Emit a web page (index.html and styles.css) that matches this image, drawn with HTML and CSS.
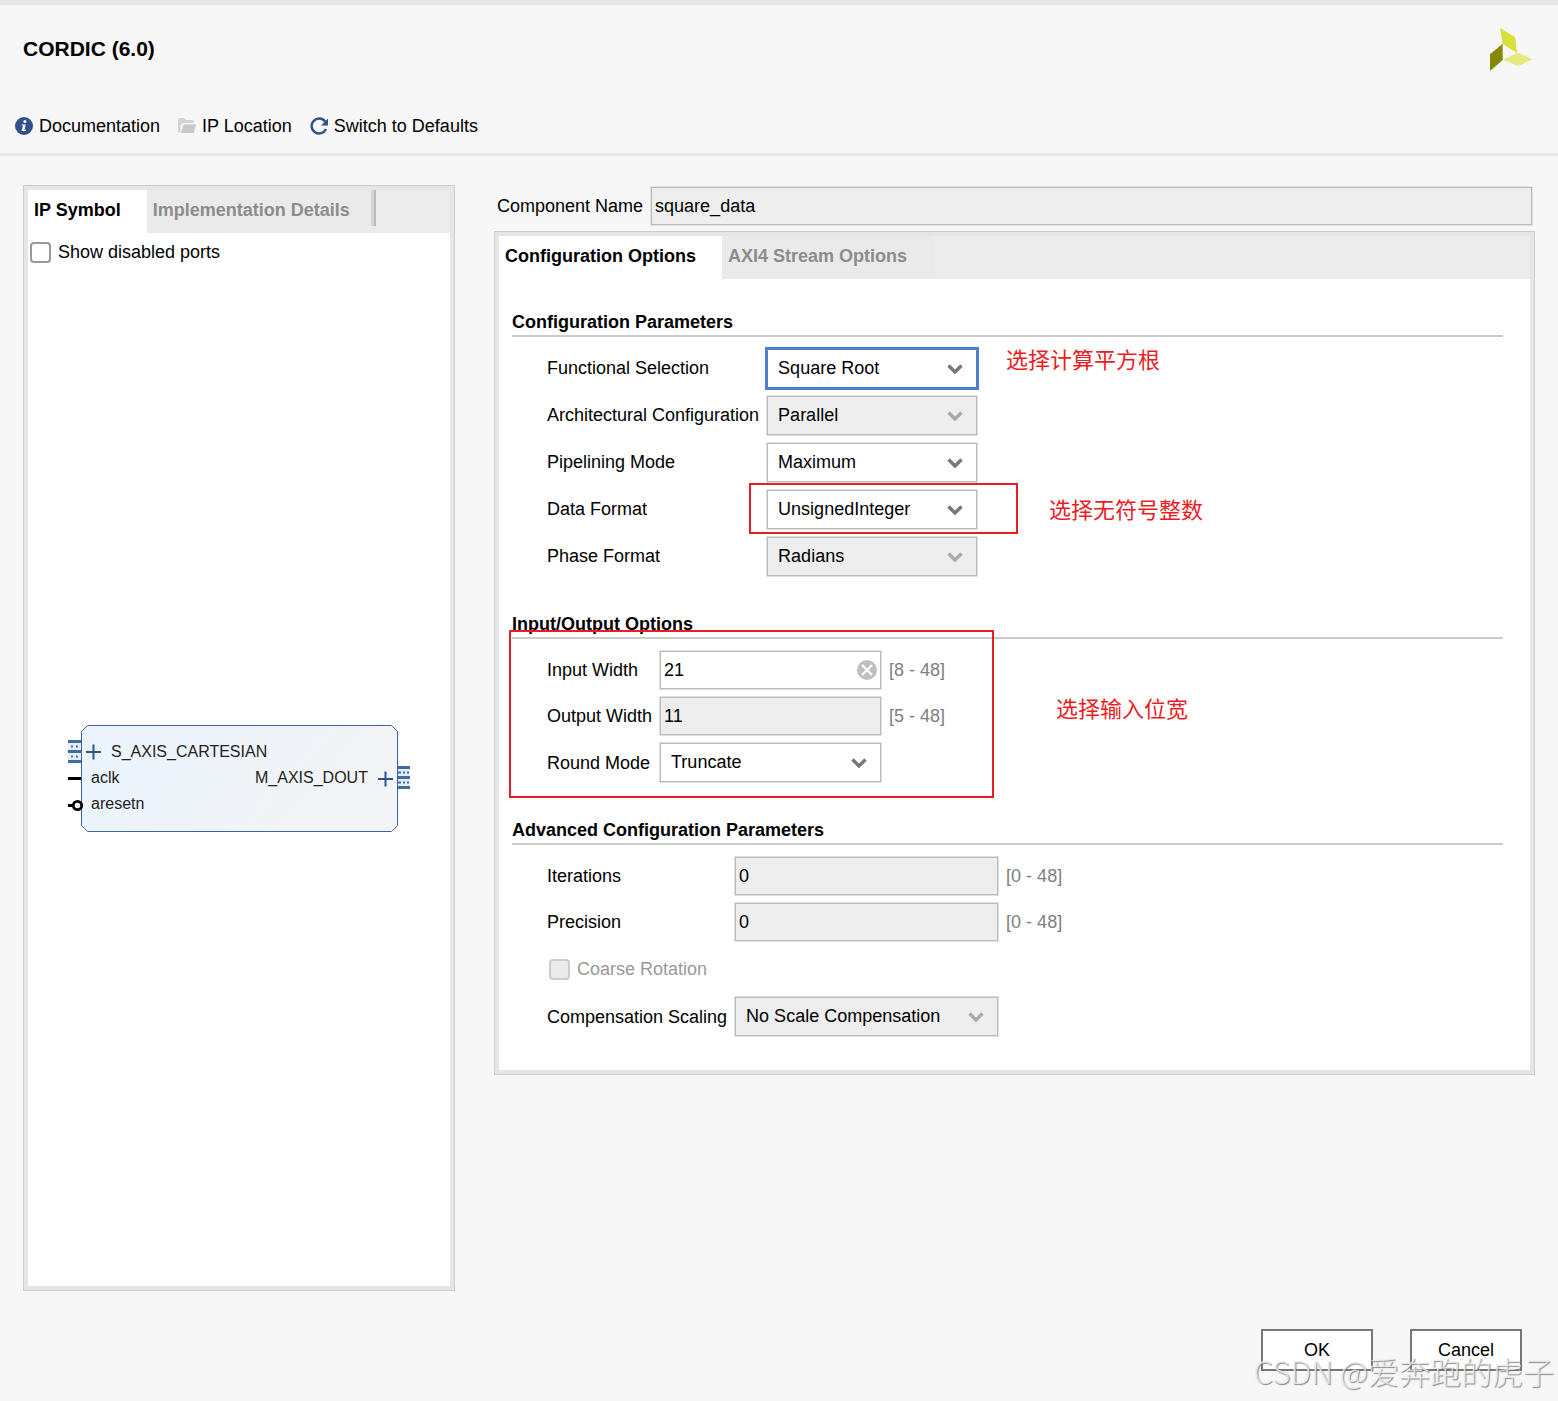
FILE: index.html
```html
<!DOCTYPE html>
<html lang="en">
<head>
  <meta charset="UTF-8" />
  <title>CORDIC (6.0)</title>
  <link rel="stylesheet" href="styles.css">
</head>
<body>

<div class="dialog">
  <header class="header">
    <div class="title-row">
      <h1>CORDIC (6.0)</h1>
      <svg class="logo" width="43" height="43" viewBox="0 0 43 43" aria-hidden="true">
        <polygon points="10,0 25,9 27,25 12.7,16" fill="#d5e03a" />
        <polygon points="0,26.3 12.7,15.7 12.7,32 0,43" fill="#84880b" />
        <polygon points="13,31.7 27.7,24.7 42.7,31.3 28.3,38" fill="#e3ea7b" />
      </svg>
    </div>
    <nav class="toolbar">
      <a href="#" class="tool">
        <svg width="18" height="18" viewBox="0 0 18 18" aria-hidden="true">
          <circle cx="9" cy="9" r="9" fill="#31508c" />
          <circle cx="9.9" cy="4.6" r="1.5" fill="#fff" />
          <path d="M6.6 7.4h4.2l-1.3 5.3h1.4v1.2H6.6l1.4-5.3H6.6z" fill="#fff" />
        </svg>
        Documentation
      </a>
      <a href="#" class="tool">
        <svg width="18" height="18" viewBox="0 0 18 18" aria-hidden="true">
          <path d="M0 2.5L1.5 1H6l2 2h7.5v3H5L2.5 9v6.5H0z" fill="#d4d4d4" />
          <path d="M5.5 7.5H18L15.8 16H3z" fill="#c8c8c8" />
        </svg>
        IP Location
      </a>
      <a href="#" class="tool">
        <svg width="18" height="18" viewBox="0 0 18 18" aria-hidden="true">
          <path d="M15.2 4.6A7.5 7.5 0 1 0 16 12" fill="none" stroke="#31508c" stroke-width="2.4" />
          <path d="M18 1.5V8.5H11z" fill="#31508c" />
        </svg>
        Switch to Defaults
      </a>
    </nav>
  </header>

  <main class="main">
    <section class="panel symbol-panel">
      <div class="tabs">
        <button class="tab active">IP Symbol</button>
        <button class="tab">Implementation Details</button>
        <span class="tab-divider"></span>
      </div>
      <label class="check show-ports">
        <input type="checkbox" />
        Show disabled ports
      </label>
      <div class="canvas">
        <svg class="symbol" width="342" height="107" viewBox="0 0 342 107">
          <defs>
            <linearGradient id="block-fill" x1="0" y1="0" x2="1" y2="0.3">
              <stop offset="0" stop-color="#eaf4ff" />
              <stop offset="1" stop-color="#f3f4f5" />
            </linearGradient>
          </defs>
          <path d="M19.5 0.5H323.5L329.5 6.5V100.5L323.5 106.5H19.5L13.5 100.5V6.5z" fill="url(#block-fill)" stroke="#3d62a3" />

          <!-- slave bus -->
          <rect x="0" y="15" width="13" height="23" fill="#e4eefa" />
          <path d="M0 16.5H13M0 26.5H13M0 36.5H13" stroke="#3e6ca3" stroke-width="3" />
          <path d="M3 21.5h2m3 0h2M3 31.5h2m3 0h2" stroke="#3e6ca3" stroke-width="2" />
          <path d="M18 27H33M25.5 19.5V34.5" stroke="#2f4f8f" stroke-width="2" />
          <text x="43" y="32">S_AXIS_CARTESIAN</text>

          <!-- clock and reset -->
          <path d="M0 53.5H13" stroke="#000" stroke-width="3" />
          <text x="23" y="58">aclk</text>
          <path d="M0 80.5H5" stroke="#000" stroke-width="3" />
          <circle cx="9.5" cy="80.5" r="4.2" fill="#fff" stroke="#000" stroke-width="2.8" />
          <text x="23" y="84">aresetn</text>

          <!-- master bus -->
          <rect x="330" y="41" width="12" height="23" fill="#e4eefa" />
          <path d="M330 42.5H342M330 52.5H342M330 62.5H342" stroke="#3e6ca3" stroke-width="3" />
          <path d="M330 47.5h3m2 0h2m2 0h2M330 57.5h3m2 0h2m2 0h2" stroke="#3e6ca3" stroke-width="2" />
          <path d="M310 54H325M317.5 46.5V61.5" stroke="#2f4f8f" stroke-width="2" />
          <text x="187" y="58">M_AXIS_DOUT</text>
        </svg>
      </div>
    </section>

    <div class="settings">
      <div class="component-row">
        <label for="component-name">Component Name</label>
        <input type="text" id="component-name" value="square_data" disabled />
      </div>

      <section class="panel">
        <div class="tabs">
          <button class="tab active">Configuration Options</button>
          <button class="tab">AXI4 Stream Options</button>
        </div>

        <div class="options">
          <section class="group">
            <h2>Configuration Parameters</h2>
            <div class="fields fields-config">
              <label for="functional-selection">Functional Selection</label>
              <select id="functional-selection" class="focused"><option>Square Root</option></select>

              <label for="architecture">Architectural Configuration</label>
              <select id="architecture" disabled><option>Parallel</option></select>

              <label for="pipelining">Pipelining Mode</label>
              <select id="pipelining"><option>Maximum</option></select>

              <label for="data-format">Data Format</label>
              <select id="data-format"><option>UnsignedInteger</option></select>

              <label for="phase-format">Phase Format</label>
              <select id="phase-format" disabled><option>Radians</option></select>
            </div>
            <div class="mark mark-format"></div>
            <p class="note note-function">选择计算平方根</p>
            <p class="note note-format">选择无符号整数</p>
          </section>

          <section class="group">
            <h2>Input/Output Options</h2>
            <div class="fields fields-io">
              <label for="input-width">Input Width</label>
              <div class="clearable">
                <input type="text" id="input-width" value="21" />
                <button class="clear" aria-label="Clear">
                  <svg width="20" height="20" viewBox="0 0 20 20" aria-hidden="true">
                    <circle cx="10" cy="10" r="10" fill="#bfbfbf" />
                    <path d="M5 5L15 15M15 5L5 15" stroke="#fff" stroke-width="2.4" />
                  </svg>
                </button>
              </div>
              <span class="range">[8 - 48]</span>

              <label for="output-width">Output Width</label>
              <input type="text" id="output-width" value="11" disabled />
              <span class="range">[5 - 48]</span>

              <label for="round-mode">Round Mode</label>
              <select id="round-mode"><option>Truncate</option></select>
            </div>
            <div class="mark mark-io"></div>
            <p class="note note-io">选择输入位宽</p>
          </section>

          <section class="group">
            <h2>Advanced Configuration Parameters</h2>
            <div class="fields fields-advanced">
              <label for="iterations">Iterations</label>
              <input type="text" id="iterations" value="0" disabled />
              <span class="range">[0 - 48]</span>

              <label for="precision">Precision</label>
              <input type="text" id="precision" value="0" disabled />
              <span class="range">[0 - 48]</span>

              <label class="check coarse">
                <input type="checkbox" disabled />
                Coarse Rotation
              </label>

              <label for="scaling">Compensation Scaling</label>
              <select id="scaling" disabled><option>No Scale Compensation</option></select>
            </div>
          </section>
        </div>
      </section>
    </div>
  </main>

  <footer class="footer">
    <button class="btn">OK</button>
    <button class="btn">Cancel</button>
  </footer>

  <div class="watermark">CSDN @爱奔跑的虎子</div>
</div>

</body>
</html>
```

FILE: styles.css
```css
* {
  box-sizing: border-box;
}

body {
  margin: 0;
  font-family: "Liberation Sans", Arial, "Noto Sans CJK SC", sans-serif;
  font-size: 18px;
  line-height: 22px;
  color: #000;
  background: #f7f7f7;
}

button,
input,
select {
  font: inherit;
  color: inherit;
}

.dialog {
  position: relative;
  display: flex;
  flex-direction: column;
  min-height: 100vh;
  border-top: 5px solid #e6e6e6;
}

/* header */

.header {
  padding: 23px 25px 16px 15px;
  border-bottom: 3px solid #e6e6e6;
}

.title-row {
  display: flex;
  justify-content: space-between;
  align-items: center;
  padding-left: 8px;
  margin-bottom: 44px;
}

h1 {
  margin: 0;
  padding-bottom: 2px;
  font-size: 21px;
  line-height: 24px;
}

.toolbar {
  display: flex;
  gap: 18px;
}

.tool {
  display: flex;
  align-items: center;
  gap: 6px;
  color: inherit;
  text-decoration: none;
}

/* panels */

.main {
  flex: 1;
  display: flex;
  gap: 39px;
  padding: 29px 23px 0;
}

.panel {
  border: 1px solid #ccc;
  padding: 4px;
  background: #e6e6e6;
}

.symbol-panel {
  display: flex;
  flex-direction: column;
  flex: 0 0 432px;
}

.settings {
  flex: 1;
  min-width: 0;
}

.tabs {
  display: flex;
  background: #ececec;
}

.tab {
  height: 43px;
  padding: 0 26px 3px 6px;
  border: none;
  background: #eaeaea;
  color: #8c8c8c;
  font-weight: bold;
  cursor: pointer;
}

.tab.active {
  background: #fff;
  color: #000;
}

.tab-divider {
  height: 36px;
  width: 5px;
  margin-left: -5px;
  background: #d4d4d4;
  border-right: 2px solid #bbb;
}

.check {
  display: flex;
  align-items: center;
  gap: 7px;
}

.check input {
  appearance: none;
  width: 21px;
  height: 21px;
  margin: 0;
  border: 2px solid #999;
  border-radius: 4px;
  background: #fff;
}

.check input:disabled {
  border-color: #ccc;
  background: #ebebeb;
}

.show-ports {
  height: 38px;
  padding-left: 2px;
  background: #fff;
}

.canvas {
  flex: 1;
  display: flex;
  align-items: center;
  justify-content: center;
  background: #fff;
}

.symbol text {
  font-size: 16px;
  fill: #222;
}

/* form controls */

input[type="text"],
select {
  width: 100%;
  border: 1px solid #bbb;
  outline: 1px solid #e0e0e0;
  background-color: #fff;
}

input[type="text"] {
  height: 38px;
  padding: 0 3px;
}

select {
  appearance: none;
  height: 39px;
  padding: 0 32px 2px 10px;
  background-image: url("data:image/svg+xml,%3Csvg xmlns='http://www.w3.org/2000/svg' width='16' height='10'%3E%3Cpath d='M1.5 1.5L8 8L14.5 1.5' fill='none' stroke='%23777' stroke-width='3.4'/%3E%3C/svg%3E");
  background-repeat: no-repeat;
  background-position: right 13px center;
}

select:disabled {
  background-image: url("data:image/svg+xml,%3Csvg xmlns='http://www.w3.org/2000/svg' width='16' height='10'%3E%3Cpath d='M1.5 1.5L8 8L14.5 1.5' fill='none' stroke='%23aaa' stroke-width='3.4'/%3E%3C/svg%3E");
}

input[type="text"]:disabled,
select:disabled {
  background-color: #eee;
  color: #000;
  opacity: 1;
}

select.focused {
  border-color: #4f7dcf;
  outline: 2px solid #4f7dcf;
}

.component-row {
  display: flex;
  align-items: center;
  gap: 8px;
  padding: 2px 3px 6px;
}

.component-row label {
  flex: none;
}

.options {
  display: flex;
  flex-direction: column;
  gap: 37px;
  padding: 32px 27px 34px 13px;
  background: #fff;
}

.group {
  position: relative;
}

h2 {
  margin: 0 0 12px;
  padding-bottom: 2px;
  border-bottom: 2px solid #ccc;
  font-size: 18px;
  line-height: 22px;
}

.fields {
  display: grid;
  align-items: center;
  gap: 8px;
  padding-left: 35px;
}

.fields-config {
  grid-template-columns: max-content 210px;
}

.fields-config label {
  padding-bottom: 2px;
}

.fields-io {
  grid-template-columns: max-content 221px max-content;
}

.fields-advanced {
  grid-template-columns: max-content 263px max-content;
}

.fields select {
  grid-column: 2;
}

.coarse {
  grid-column: 1 / -1;
  height: 40px;
  padding-left: 2px;
  color: #999;
}

.range {
  color: #808080;
}

.clearable {
  position: relative;
}

.clear {
  position: absolute;
  top: 9px;
  right: 4px;
  display: flex;
  padding: 0;
  border: none;
  background: none;
  cursor: pointer;
}

/* annotations drawn over the form */

.mark {
  position: absolute;
  border: 2px solid #ed1c24;
  pointer-events: none;
}

.mark-format {
  top: 172px;
  left: 237px;
  width: 269px;
  height: 51px;
}

.mark-io {
  top: 17px;
  left: -3px;
  width: 485px;
  height: 168px;
}

.note {
  position: absolute;
  margin: 0;
  color: #ed1c24;
  font-family: "Noto Sans CJK SC", sans-serif;
  font-size: 22px;
  line-height: 26px;
  white-space: nowrap;
}

.note-function {
  top: 34px;
  left: 494px;
}

.note-format {
  top: 184px;
  left: 537px;
}

.note-io {
  top: 81px;
  left: 544px;
}

/* footer */

.footer {
  display: flex;
  justify-content: flex-end;
  gap: 37px;
  padding: 38px 36px 30px;
}

.btn {
  width: 112px;
  height: 42px;
  padding: 0;
  border: 2px solid #777;
  background: #fff;
  cursor: pointer;
}

.watermark {
  position: absolute;
  right: 4px;
  bottom: 12px;
  color: rgba(240, 240, 240, 0.8);
  font-family: "Noto Sans CJK SC", sans-serif;
  font-size: 31px;
  font-weight: 300;
  line-height: 36px;
  text-shadow: 1px 1px 1px rgba(110, 110, 110, 0.8);
  white-space: nowrap;
  pointer-events: none;
}
```
